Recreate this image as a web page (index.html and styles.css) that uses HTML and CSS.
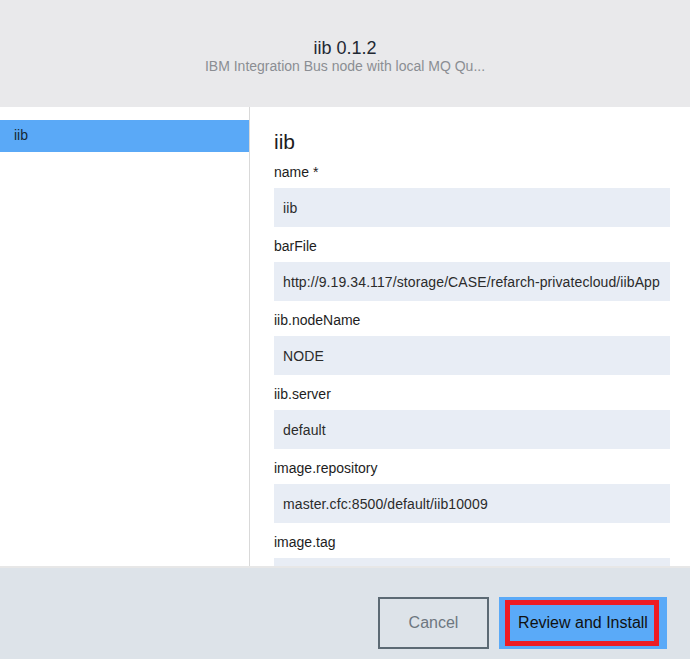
FILE: index.html
```html
<!DOCTYPE html>
<html lang="en">
<head>
<meta charset="utf-8">
<title>iib 0.1.2</title>
<link rel="stylesheet" href="styles.css">
</head>
<body>
<div class="page">
  <header class="header">
    <div class="title">iib 0.1.2</div>
    <div class="subtitle">IBM Integration Bus node with local MQ Qu...</div>
  </header>
  <div class="main">
    <nav class="sidebar">
      <div class="nav-item active">iib</div>
    </nav>
    <section class="content">
      <h2 class="section-title">iib</h2>
      <div class="field">
        <label class="label">name *</label>
        <div class="input">iib</div>
      </div>
      <div class="field">
        <label class="label">barFile</label>
        <div class="input">http://9.19.34.117/storage/CASE/refarch-privatecloud/iibApp</div>
      </div>
      <div class="field">
        <label class="label">iib.nodeName</label>
        <div class="input">NODE</div>
      </div>
      <div class="field">
        <label class="label">iib.server</label>
        <div class="input">default</div>
      </div>
      <div class="field">
        <label class="label">image.repository</label>
        <div class="input">master.cfc:8500/default/iib10009</div>
      </div>
      <div class="field">
        <label class="label">image.tag</label>
        <div class="input"></div>
      </div>
    </section>
  </div>
  <footer class="footer">
    <button class="btn btn-cancel">Cancel</button>
    <button class="btn btn-primary">Review and Install<span class="highlight"></span></button>
  </footer>
</div>
</body>
</html>
```
FILE: styles.css
```css
* { box-sizing: border-box; }
html, body { margin: 0; padding: 0; }
body {
  font-family: "Liberation Sans", Arial, sans-serif;
  background: #ffffff;
  color: #1d1d1d;
}
.page {
  width: 690px;
  height: 659px;
  display: flex;
  flex-direction: column;
  overflow: hidden;
}
.header {
  height: 107px;
  flex: none;
  background: #e9e9eb;
  padding-top: 38px;
  text-align: center;
}
.title {
  font-size: 18px;
  line-height: 20px;
  color: #1f2833;
}
.subtitle {
  font-size: 14px;
  line-height: 16px;
  color: #8b8e93;
}
.main {
  flex: 1;
  display: flex;
  min-height: 0;
  overflow: hidden;
}
.sidebar {
  width: 250px;
  flex: none;
  border-right: 1px solid #d9d9d9;
  padding-top: 13px;
}
.nav-item {
  height: 32px;
  line-height: 31px;
  padding-left: 14px;
  font-size: 14px;
  color: #152935;
}
.nav-item.active {
  background: #5aa9f7;
}
.content {
  flex: 1;
  padding: 24px 20px 0 24px;
  overflow: hidden;
}
.section-title {
  margin: 0;
  font-size: 21px;
  font-weight: normal;
  line-height: 22px;
  color: #1d1d1d;
}
.field {
  display: flex;
  flex-direction: column;
}
.label {
  margin-top: 9px;
  margin-bottom: 6px;
  font-size: 14px;
  line-height: 20px;
  color: #1d1d1d;
}
.input {
  height: 39px;
  background: #e8edf5;
  padding-left: 9px;
  font-size: 14px;
  letter-spacing: 0.1px;
  line-height: 40px;
  color: #2b2b2b;
  white-space: nowrap;
  overflow: hidden;
}
.footer {
  height: 93px;
  flex: none;
  background: #dde3e9;
  border-top: 2px solid #e7e7e7;
  display: flex;
  justify-content: flex-end;
  align-items: flex-start;
  gap: 10px;
  padding: 29px 23px 0 0;
}
.btn {
  height: 52px;
  font-family: "Liberation Sans", Arial, sans-serif;
  font-size: 16px;
  padding: 0;
  margin: 0;
  cursor: pointer;
}
.btn-cancel {
  width: 111px;
  background: transparent;
  border: 2px solid #5c6a74;
  color: #6d7780;
}
.btn-primary {
  position: relative;
  width: 168px;
  background: #5aaaf8;
  border: none;
  color: #111111;
}
.highlight {
  position: absolute;
  left: 6px;
  right: 8px;
  top: 3px;
  bottom: 3px;
  border: 5px solid #ed1c24;
  pointer-events: none;
}
```
